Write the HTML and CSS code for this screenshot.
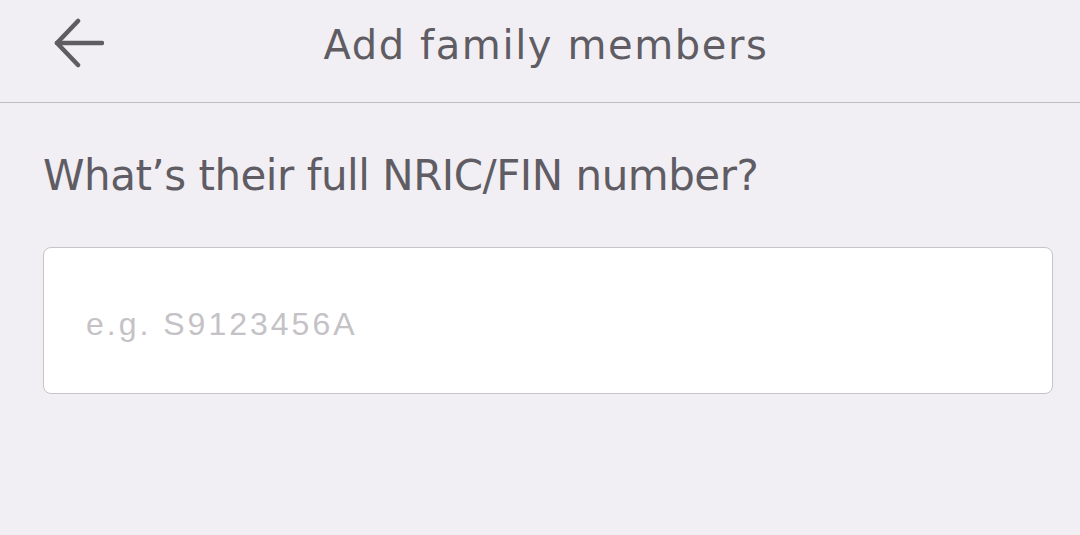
FILE: index.html
```html
<!DOCTYPE html>
<html lang="en">
<head>
<meta charset="utf-8">
<title>Add family members</title>
<link rel="stylesheet" href="styles.css">
</head>
<body>
<header class="topbar">
  <button class="back" aria-label="Back">
    <svg width="50" height="50" viewBox="0 0 50 50" fill="none" stroke="#5f5c63" stroke-width="4.5" stroke-linecap="round" stroke-linejoin="round">
      <path d="M3 25 H48"/>
      <path d="M24 3 L3 25 L24 47"/>
    </svg>
  </button>
  <h1 class="title">Add family members</h1>
</header>
<main class="content">
  <label class="question" for="nric">What’s their full NRIC/FIN number?</label>
  <input class="field" id="nric" type="text" placeholder="e.g. S9123456A">
</main>
</body>
</html>
```
FILE: styles.css
```css
html,body{margin:0;padding:0}
body{background:#f1eff3;color:#5f5c64;font-family:"DejaVu Sans",sans-serif;width:1080px;height:535px;overflow:hidden}
.topbar{position:relative;border-bottom:1px solid #bfbdc1;display:flex;align-items:center;justify-content:center;box-sizing:border-box;height:103px}
.back{position:absolute;left:54px;top:18px;padding:0;margin:0;border:0;background:none;width:50px;height:50px;display:block}
.back svg{display:block}
.title{margin:0;font-weight:normal;font-size:40px;letter-spacing:1.6px;line-height:48px;color:#5f5c64;margin-top:-12px;margin-left:12px}
.content{padding:0 27px 0 43px;display:flex;flex-direction:column}
.question{font-size:42px;line-height:50px;letter-spacing:-0.5px;margin-top:48px;color:#5f5c64}
.field{margin-top:46px;height:147px;box-sizing:border-box;border:1.5px solid #c6c4c8;border-radius:8px;background:#fff;padding:8px 0 0 42px;font-family:"Liberation Sans",sans-serif;font-size:32px;letter-spacing:3px;color:#333;outline:none}
.field::placeholder{color:#c4c2c6}
```
